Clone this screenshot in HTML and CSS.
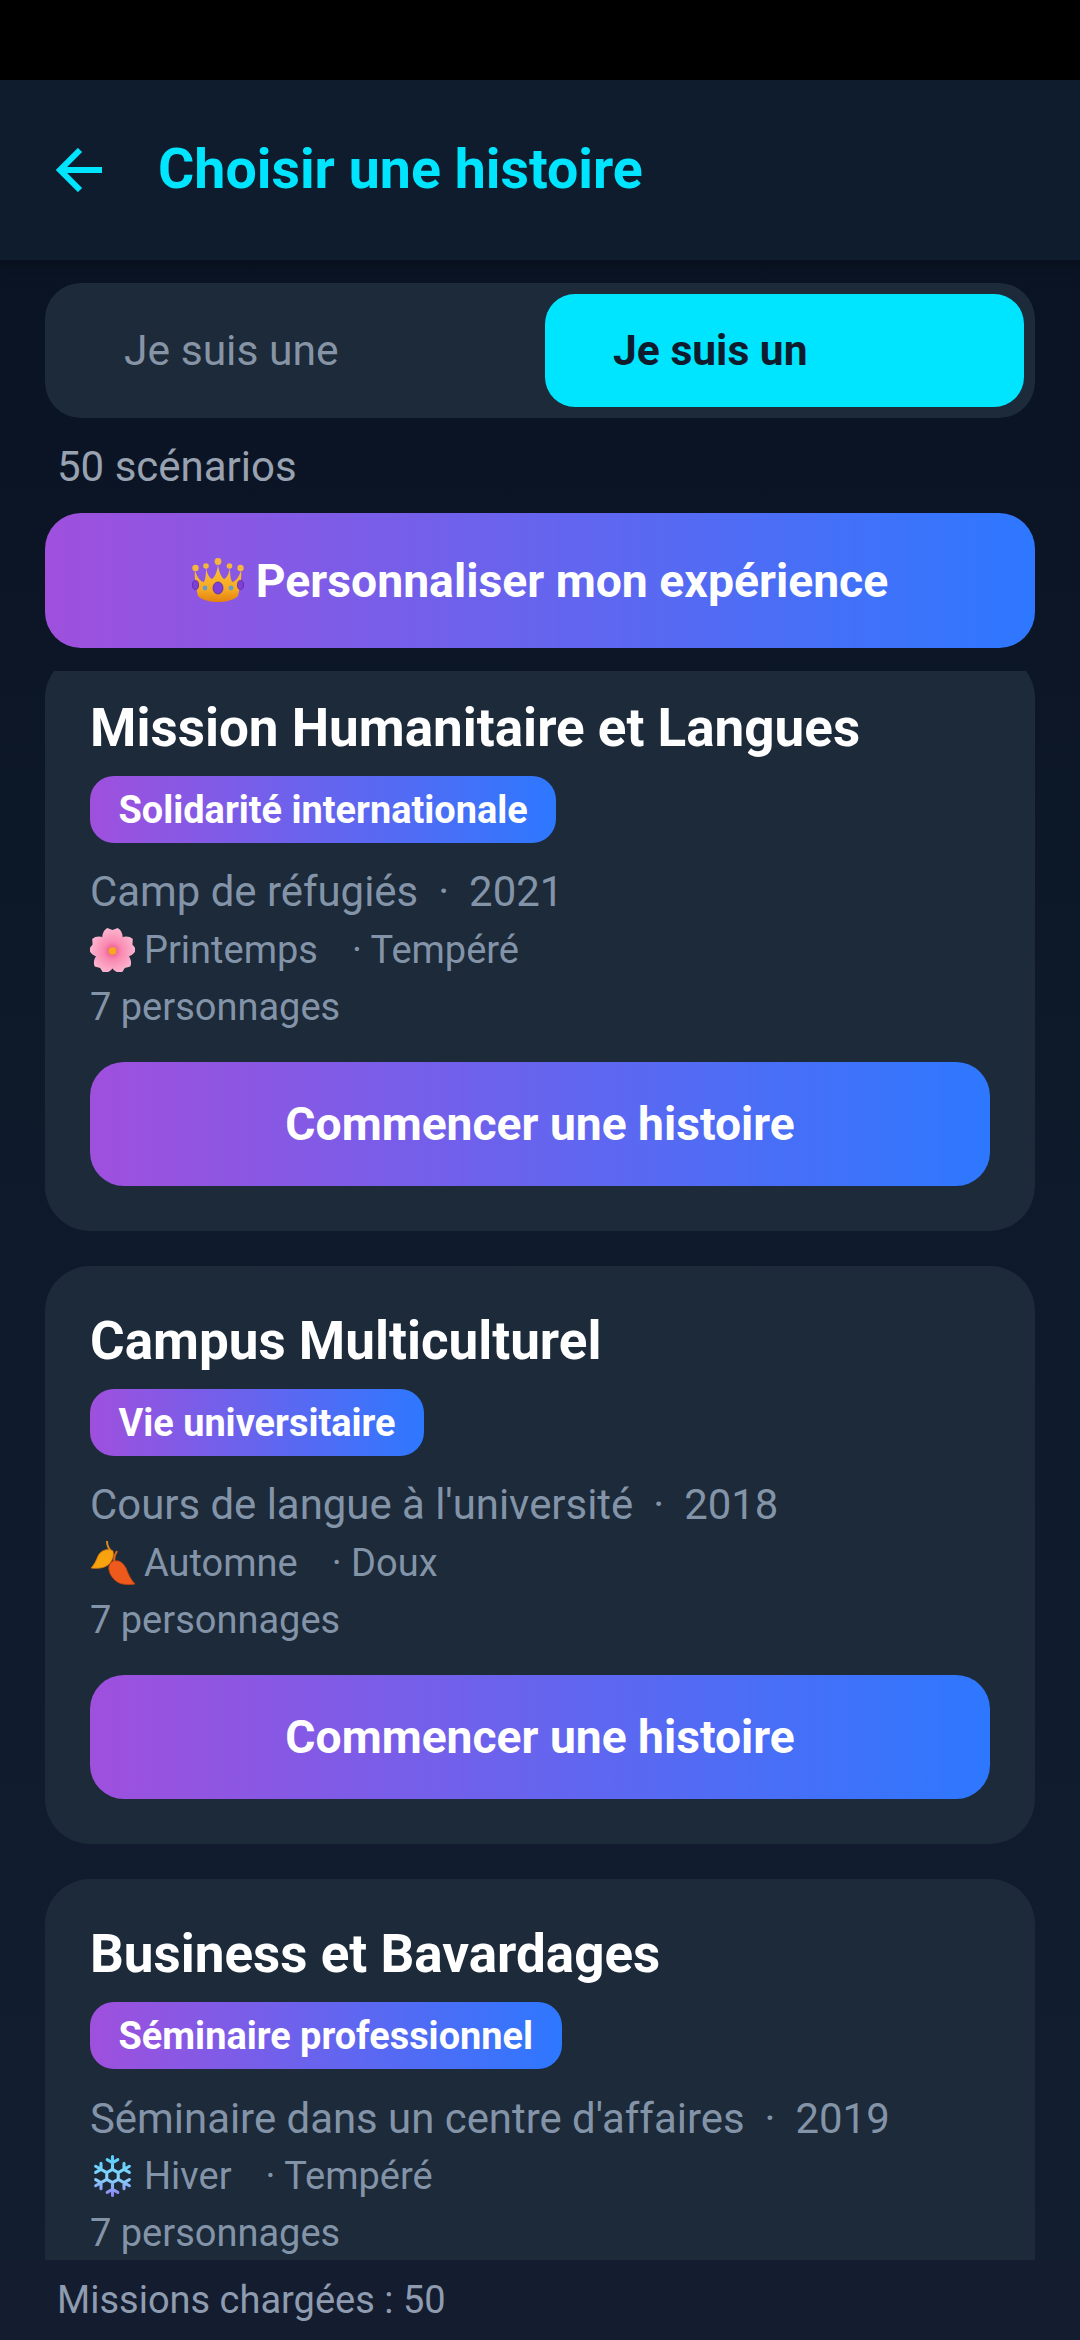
FILE: index.html
```html
<!DOCTYPE html>
<html lang="fr">
<head>
  <meta charset="UTF-8" />
  <meta name="viewport" content="width=device-width, initial-scale=1.0" />
  <title>Choisir une histoire</title>
  <link rel="stylesheet" href="styles.css">
</head>
<body>
<div class="app">
  <div class="statusbar"></div>

  <header class="topbar">
    <svg class="back" viewBox="0 0 48 44" fill="none" stroke="#00e5ff" stroke-width="6">
      <path d="M47 22H5M25 2 5 22l20 20"/>
    </svg>
    <h1>Choisir une histoire</h1>
  </header>

  <main class="content">
    <div class="toggle">
      <div class="tab">Je suis une</div>
      <div class="tab active">Je suis un</div>
    </div>
    <div class="count">50 scénarios</div>
    <button class="premium">
      <svg class="crown" viewBox="0 0 52 45">
        <defs>
          <linearGradient id="gold" x1="0" y1="0" x2="0" y2="1">
            <stop offset="0" stop-color="#fcc934"/>
            <stop offset=".7" stop-color="#f5a623"/>
            <stop offset="1" stop-color="#e2820f"/>
          </linearGradient>
        </defs>
        <path fill="url(#gold)" d="M3 12C5 20 9 24 12 24 14 20 14 14 14 10 15 15 17 20 20 21 24 18 26 10 26 5 26 10 28 18 32 21 35 20 37 15 38 10 38 14 38 20 40 24 43 24 47 20 49 12 50 20 48 30 46 38 38 46 14 46 6 38 4 30 2 20 3 12Z"/>
        <g fill="#f4b63c">
          <circle cx="3.5" cy="10" r="3.2"/><circle cx="14" cy="8" r="2.8"/><circle cx="26" cy="3.5" r="3.4"/><circle cx="37.5" cy="8" r="2.8"/><circle cx="48.5" cy="10" r="3.2"/>
        </g>
        <g fill="#7d3fd8" stroke="#5a2ba8" stroke-width=".8">
          <ellipse cx="26" cy="30" rx="5" ry="6"/><ellipse cx="3.5" cy="27" rx="3" ry="4.6"/><ellipse cx="48.5" cy="27" rx="3" ry="4.6"/>
        </g>
        <circle cx="13" cy="30" r="2.4" fill="#6a9bc4"/><circle cx="39" cy="30" r="2.4" fill="#6a9bc4"/>
      </svg>
      Personnaliser mon expérience
    </button>

    <div class="list">
      <article class="card">
        <h2>Mission Humanitaire et Langues</h2>
        <span class="badge">Solidarité internationale</span>
        <div class="place"><span>Camp de réfugiés</span><span>·</span><span>2021</span></div>
        <div class="season">
          <svg class="emoji" viewBox="-21 -22 42 42">
            <defs>
              <radialGradient id="petal" gradientUnits="userSpaceOnUse" cx="0" cy="0" r="22">
                <stop offset="0" stop-color="#ea4f86"/>
                <stop offset=".4" stop-color="#f98ab1"/>
                <stop offset="1" stop-color="#fcb6cf"/>
              </radialGradient>
            </defs>
            <g fill="url(#petal)">
              <path d="M0 0C-12-5-12-18-5-22L0-20 5-22C12-18 12-5 0 0Z"/>
              <path transform="rotate(72)" d="M0 0C-12-5-12-18-5-22L0-20 5-22C12-18 12-5 0 0Z"/>
              <path transform="rotate(144)" d="M0 0C-12-5-12-18-5-22L0-20 5-22C12-18 12-5 0 0Z"/>
              <path transform="rotate(216)" d="M0 0C-12-5-12-18-5-22L0-20 5-22C12-18 12-5 0 0Z"/>
              <path transform="rotate(288)" d="M0 0C-12-5-12-18-5-22L0-20 5-22C12-18 12-5 0 0Z"/>
            </g>
            <circle r="3.6" fill="#f6a81c"/>
          </svg>
          <span>Printemps</span><span class="climate">· Tempéré</span>
        </div>
        <div class="people">7 personnages</div>
        <button class="start">Commencer une histoire</button>
      </article>

      <article class="card">
        <h2>Campus Multiculturel</h2>
        <span class="badge">Vie universitaire</span>
        <div class="place"><span>Cours de langue à l'université</span><span>·</span><span>2018</span></div>
        <div class="season">
          <svg class="emoji" viewBox="0 0 45 44">
            <path fill="none" stroke="#d98a1e" stroke-width="2" d="M17 0C17 4 18 7 21 10"/>
            <path fill="#f7a30f" stroke="#d9730d" stroke-width=".8" d="M23 10C18 7 11 9 8 15 6 20 4 24 1 27 8 28 16 27 20 22 23 18 24 14 23 10Z"/>
            <path fill="none" stroke="#e0661a" stroke-width="2" d="M27 10C25 13 24 16 24 20"/>
            <path fill="#ee5a1c" stroke="#c8430f" stroke-width=".8" d="M24 20C30 19 33 22 36 27 38 33 41 39 45 43 38 44 31 44 26 40 21 36 18 30 19 25 20 22 22 20 24 20Z"/>
          </svg>
          <span>Automne</span><span class="climate">· Doux</span>
        </div>
        <div class="people">7 personnages</div>
        <button class="start">Commencer une histoire</button>
      </article>

      <article class="card">
        <h2>Business et Bavardages</h2>
        <span class="badge">Séminaire professionnel</span>
        <div class="place"><span>Séminaire dans un centre d'affaires</span><span>·</span><span>2019</span></div>
        <div class="season">
          <svg class="emoji" viewBox="-22 -21 44 42">
            <defs>
              <linearGradient id="ice" gradientUnits="userSpaceOnUse" x1="0" y1="-20" x2="0" y2="20">
                <stop offset="0" stop-color="#55cdfa"/>
                <stop offset=".55" stop-color="#86d6fb"/>
                <stop offset="1" stop-color="#8d7ff2"/>
              </linearGradient>
            </defs>
            <path fill="none" stroke="url(#ice)" stroke-width="3" stroke-linecap="round" d="M0-6.5V-19M5.2-16 0-13-5.2-16M5.6-3.25 16.5-9.5M11.26-12.5V-6.5L16.46-3.5M5.6 3.25 16.5 9.5M16.46 3.5 11.26 6.5V12.5M0 6.5V19M5.2 16 0 13-5.2 16M-5.6 3.25-16.5 9.5M-11.26 12.5V6.5L-16.46 3.5M-5.6-3.25-16.5-9.5M-16.46-3.5-11.26-6.5V-12.5M0-6.5 5.6-3.25V3.25L0 6.5-5.6 3.25V-3.25Z"/>
          </svg>
          <span>Hiver</span><span class="climate">· Tempéré</span>
        </div>
        <div class="people">7 personnages</div>
      </article>
    </div>
  </main>

  <footer class="loaded">Missions chargées : 50</footer>
</div>
</body>
</html>
```

FILE: styles.css
```css
* {
  box-sizing: border-box;
}
body {
  margin: 0;
  background: #000;
  font-family: Roboto, "Liberation Sans", sans-serif;
}
button {
  font-family: inherit;
  border: none;
  color: #fff;
  font-weight: 700;
  background: linear-gradient(90deg, #9f50dd, #2d78ff);
}
.app {
  width: 1080px;
  height: 2340px;
  display: flex;
  flex-direction: column;
  overflow: hidden;
}
.statusbar {
  height: 80px;
  background: #000;
}
.topbar {
  height: 180px;
  flex-shrink: 0;
  background: #0f1c2e;
  display: flex;
  align-items: center;
  padding: 0 0 1px 55px;
  gap: 55px;
  box-shadow: 0 3px 10px rgba(0, 0, 0, 0.25);
  position: relative;
}
.back {
  width: 48px;
  height: 44px;
}
.topbar h1 {
  margin: 0;
  font-size: 55.5px;
  font-weight: 700;
  color: #00e5ff;
}
.content {
  flex: 1;
  min-height: 0;
  display: flex;
  flex-direction: column;
  padding: 23px 45px 0;
  background: linear-gradient(180deg, #0a1323, #0f1b2c 55%, #121d30);
}
.toggle {
  display: flex;
  gap: 10px;
  height: 135px;
  padding: 11px;
  flex-shrink: 0;
  border-radius: 36px;
  background: #1c2a3a;
}
.tab {
  flex: 1;
  display: flex;
  align-items: center;
  padding: 0 0 2px 68px;
  border-radius: 30px;
  font-size: 42.6px;
  color: #8794a6;
}
.tab.active {
  background: #00e5ff;
  color: #0f1c2e;
  font-weight: 700;
}
.count {
  flex-shrink: 0;
  padding-left: 12px;
  margin-top: 24px;
  height: 49px;
  line-height: 49px;
  font-size: 42px;
  color: #98a2b0;
}
.premium {
  flex-shrink: 0;
  height: 135px;
  margin-top: 22px;
  border-radius: 36px;
  font-size: 46.3px;
  display: flex;
  align-items: center;
  justify-content: center;
  gap: 12px;
}
.crown {
  width: 52px;
  height: 45px;
}
.list {
  flex: 1;
  min-height: 0;
  margin-top: 23px;
  overflow: hidden;
  display: flex;
  flex-direction: column;
  gap: 35px;
}
.card {
  flex-shrink: 0;
  height: 578px;
  padding: 45px;
  border-radius: 45px;
  background: #1c2a3a;
  display: flex;
  flex-direction: column;
  align-items: flex-start;
}
.card:first-child {
  margin-top: -18px;
}
.card h2 {
  margin: 0;
  height: 60px;
  line-height: 60px;
  font-size: 53px;
  font-weight: 700;
  color: #fff;
}
.badge {
  margin-top: 18px;
  height: 67px;
  line-height: 69px;
  padding: 0 28.5px;
  border-radius: 24px;
  font-size: 37.9px;
  font-weight: 700;
  color: #fff;
  background: linear-gradient(90deg, #9f50dd, #2d78ff);
}
.place {
  margin-top: 20px;
  height: 58px;
  display: flex;
  align-items: center;
  gap: 20px;
  font-size: 41.9px;
  color: #8494a8;
}
.season {
  height: 58px;
  display: flex;
  align-items: center;
  font-size: 38px;
  color: #8494a8;
}
.emoji {
  width: 45px;
  height: 44px;
  margin-right: 9px;
}
.climate {
  margin-left: 34px;
}
.people {
  height: 57px;
  line-height: 57px;
  font-size: 38px;
  color: #8494a8;
}
.start {
  margin-top: 26px;
  width: 100%;
  height: 125px;
  border-radius: 34px;
  font-size: 46.2px;
}
.loaded {
  height: 80px;
  flex-shrink: 0;
  display: flex;
  align-items: center;
  padding-left: 57px;
  font-size: 38px;
  color: #8f9cb0;
  background: #141d30;
}
```
